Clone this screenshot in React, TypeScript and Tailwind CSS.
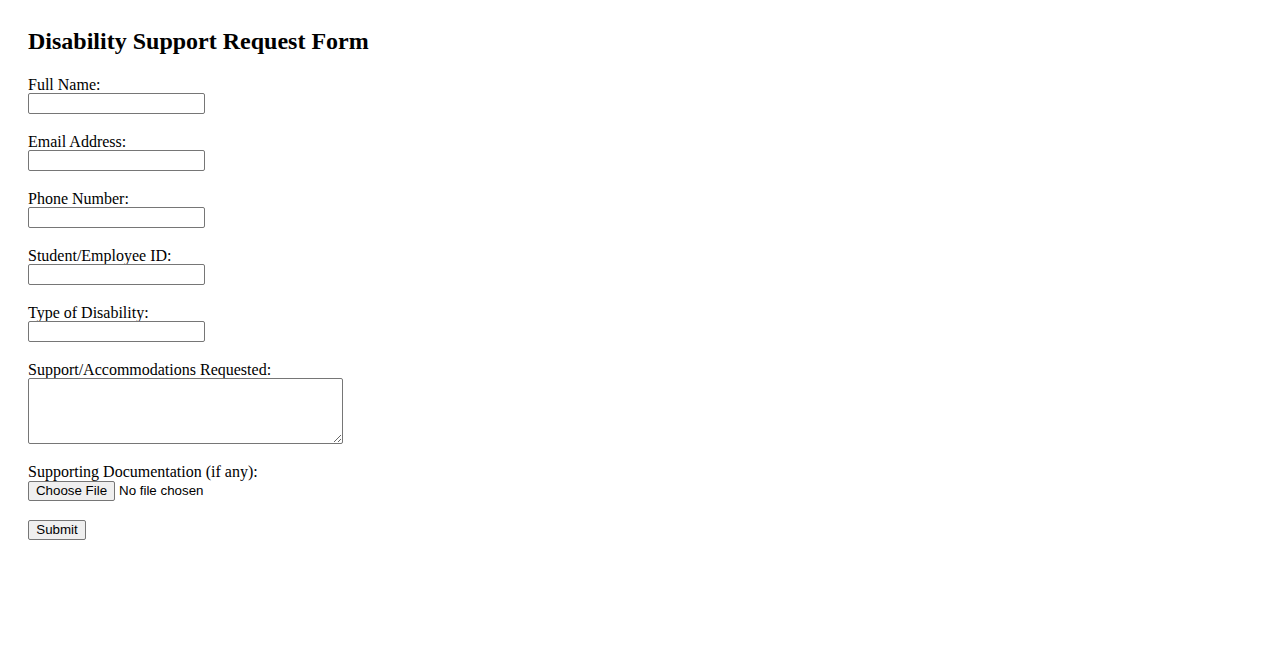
import React from 'react';

const serif = "font-['Liberation_Serif','Times_New_Roman',serif]";
const sans = "font-['Liberation_Sans',Arial,sans-serif]";

const fields = [
  { id: 'fullName', label: 'Full Name:', type: 'text' },
  { id: 'email', label: 'Email Address:', type: 'email' },
  { id: 'phone', label: 'Phone Number:', type: 'tel' },
  { id: 'studentId', label: 'Student/Employee ID:', type: 'text' },
  { id: 'disability', label: 'Type of Disability:', type: 'text' },
];

const App: React.FC = () => {
  return (
    <div className={`min-h-screen bg-white text-black ${serif} px-[28px] pt-[27px]`}>
      <h2 className="text-[24px] font-bold leading-[28px] mb-[20px]">Disability Support Request Form</h2>
      <form className="flex flex-col" onSubmit={e => e.preventDefault()}>
        {fields.map(f => (
          <div key={f.id} className="flex flex-col items-start mb-[18px]">
            <label htmlFor={f.id} className="block h-[18px] text-[16px] leading-[19px]">{f.label}</label>
            <input
              id={f.id}
              type={f.type}
              className={`h-[21px] w-[177px] border border-[#767676] rounded-[2px] px-[2px] text-[13.33px] ${sans} bg-white`}
            />
          </div>
        ))}

        {/* textarea */}
        <div className="flex flex-col items-start mb-[18px]">
          <label htmlFor="support" className="block h-[18px] text-[16px] leading-[19px]">Support/Accommodations Requested:</label>
          <textarea
            id="support"
            className={`h-[66px] w-[315px] border border-[#767676] rounded-[2px] px-[2px] text-[13.33px] font-['Liberation_Mono',monospace] bg-white resize`}
          />
        </div>

        <div className="flex flex-col items-start mb-[16px]">
          <label htmlFor="docs" className="block h-[18px] text-[16px] leading-[19px]">Supporting Documentation (if any):</label>
          <div className={`flex items-center h-[20px] mt-[1px] text-[13.33px] ${sans}`}>
            <label
              htmlFor="docs"
              className="flex items-center h-[20px] w-[87px] justify-center border border-[#767676] rounded-[2px] bg-[#efefef] leading-[16px] cursor-default"
            >
              Choose File
            </label>
            <span className="ml-[4px]">No file chosen</span>
            <input id="docs" type="file" className="hidden" />
          </div>
        </div>

        <div>
          <button
            type="submit"
            className={`h-[20px] w-[58px] border border-[#767676] rounded-[2px] bg-[#efefef] text-[13.33px] ${sans} leading-[16px]`}
          >
            Submit
          </button>
        </div>
      </form>
    </div>
  );
};

export default App;
